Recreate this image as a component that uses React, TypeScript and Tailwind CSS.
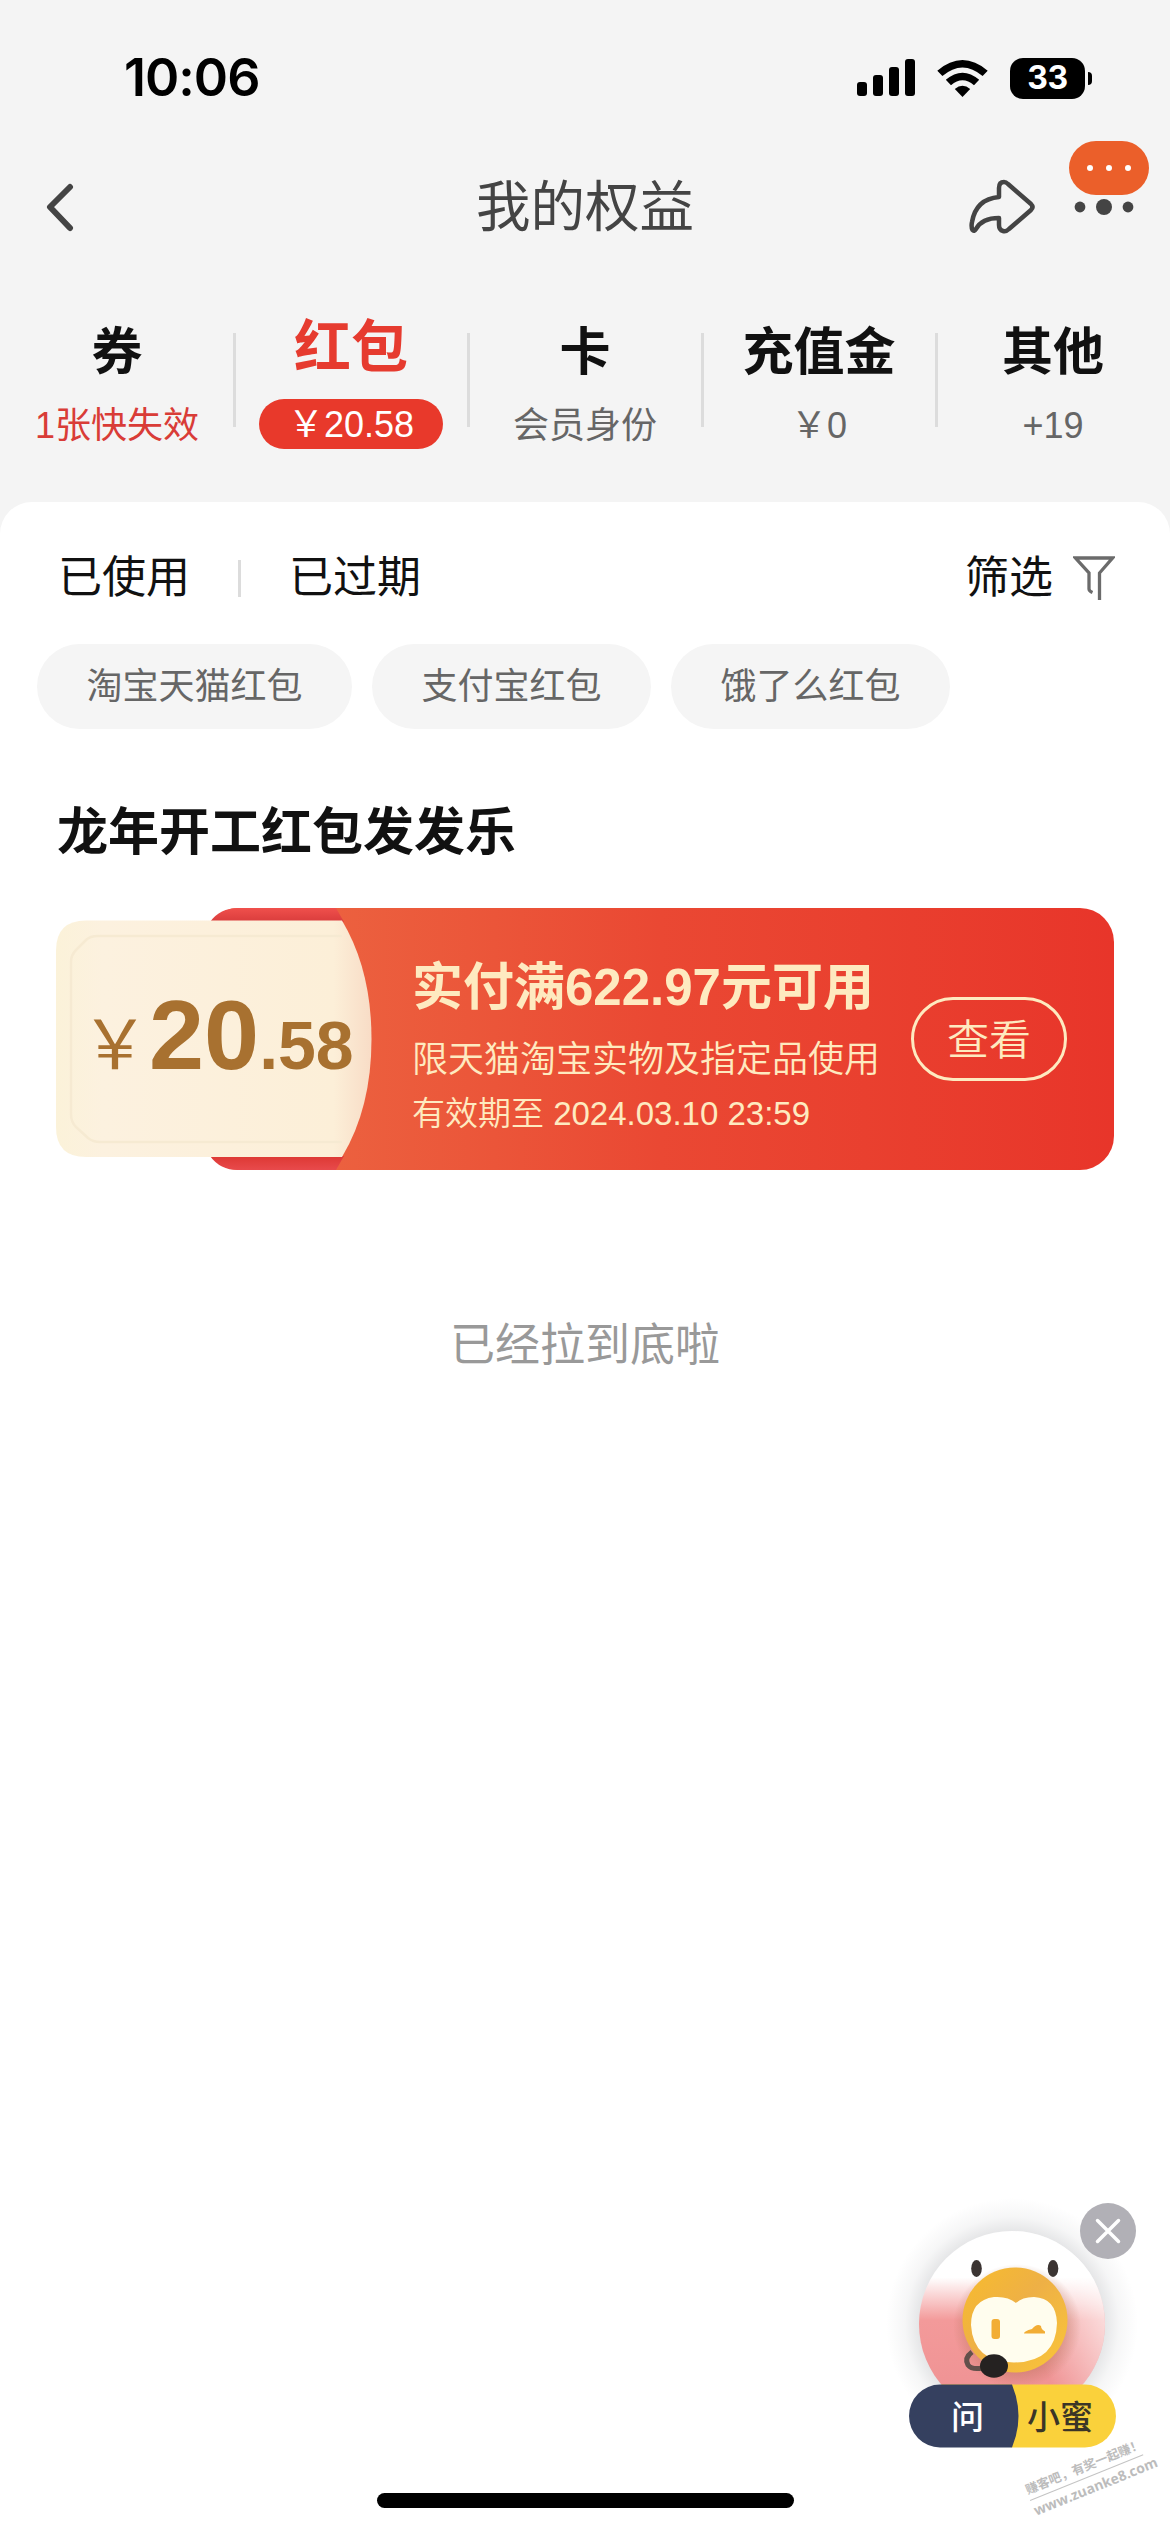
import { ReactNode } from 'react';
import clsx from 'clsx';

interface Benefit {
  name: string;
  detail: string;
  active?: boolean;
  urgent?: boolean;
}

const benefits: Benefit[] = [
  { name: '券', detail: '1张快失效', urgent: true },
  { name: '红包', detail: '￥20.58', active: true },
  { name: '卡', detail: '会员身份' },
  { name: '充值金', detail: '￥0' },
  { name: '其他', detail: '+19' },
];

const filters = ['淘宝天猫红包', '支付宝红包', '饿了么红包'];

const StatusBar = () => (
  <div className="flex h-[156px] items-center pl-[124px] pr-[78px]">
    <span className="font-['Inter'] text-[52px] font-semibold leading-none tracking-[-1px] text-black">10:06</span>
    <div className="ml-auto flex items-center">
      <svg width="58" height="38" viewBox="0 0 58 38">
        <rect x="0" y="23" width="10" height="14" rx="3" />
        <rect x="16" y="16" width="10" height="21" rx="3" />
        <rect x="32" y="8" width="10" height="29" rx="3" />
        <rect x="48" y="0" width="10" height="37" rx="3" />
      </svg>
      <svg className="ml-[22px]" width="51" height="37" viewBox="0 0 51 37">
        <path d="M25.500 37 L17.800 29 Q25.500 22.500 33.200 29 Z" />
        <path d="M8.800 19.800 Q25.500 5.500 42.200 19.800 L37 25.200 Q25.500 15.500 14 25.200 Z" />
        <path d="M0.300 10.700 Q25.500 -10.600 50.700 10.700 L45.600 16 Q25.500 -1.200 5.400 16 Z" />
      </svg>
      <div className="ml-[22px] flex h-[41px] w-[75px] items-center justify-center rounded-[13px] bg-black font-['Inter'] text-[32px] font-bold leading-none tracking-[-0.5px] text-white">
        33
      </div>
      <div className="ml-[3px] h-[13px] w-1 rounded-r-full bg-black" />
    </div>
  </div>
);

const NavBar = () => (
  <div className="relative flex h-[102px] items-center justify-center">
    <svg className="absolute left-[44px] top-[26px]" width="32" height="50" viewBox="0 0 32 50" fill="none" stroke="#444" strokeWidth="6" strokeLinecap="round" strokeLinejoin="round">
      <path d="M26 5 L6 25 L26 46" />
    </svg>
    <h1 className="pt-[3px] text-[54.500px] leading-none text-[#444]">我的权益</h1>
    <svg className="absolute left-[966px] top-[21px]" width="72" height="60" viewBox="0 0 72 60" fill="none" stroke="#444" strokeWidth="4.500" strokeLinejoin="round">
      <path d="M33 20 V11 Q33 5 38 5 Q40 5 42 7 L65 27 Q68 30 65 33 L43 52 Q40 55 37 54 Q33 53 33 48 V41 Q16 41 10 52 Q8 55 6.500 53 Q5 50 6 45 Q10 22 33 20 Z" />
    </svg>
    <svg className="absolute left-[1074px] top-[42px]" width="60" height="18" viewBox="0 0 60 18" fill="#444">
      <circle cx="6" cy="9" r="5.400" />
      <circle cx="30" cy="9" r="8" />
      <circle cx="54" cy="9" r="5.400" />
    </svg>
    <div className="absolute -top-[15px] left-[1069px] flex h-[54px] w-[80px] items-center justify-center gap-[13px] rounded-full bg-[#eb5f2a]">
      <i className="size-1.5 rounded-full bg-white" />
      <i className="size-1.5 rounded-full bg-white" />
      <i className="size-1.5 rounded-full bg-white" />
    </div>
  </div>
);

const BenefitTab = ({ name, detail, active, urgent }: Benefit) => (
  <div className="flex w-[234px] flex-col items-center pt-[64px]">
    <span
      className={clsx(
        'flex h-[60px] items-center whitespace-nowrap font-bold leading-none',
        active ? '-mt-[5px] mb-[5px] text-[57px] text-[#e63b2f]' : 'text-[51px] text-[#111]',
      )}
    >
      {name}
    </span>
    <span
      className={clsx(
        'mt-[17px] flex h-[50px] items-center whitespace-nowrap rounded-full text-[36px] leading-none',
        active && 'bg-[#e8392b] px-[29px] pt-0.5 text-white',
        urgent && 'pt-1 text-[#d93c37]',
        !active && !urgent && 'pt-1 text-[#666]',
      )}
    >
      {detail}
    </span>
  </div>
);

const FilterIcon = () => (
  <svg width="42" height="44" viewBox="0 0 42 44" fill="none" stroke="#6b6b6b" strokeWidth="3.300">
    <path d="M26.500 44 V17 L39.500 2 H2.500 L16 17 V33 Q16 35 19.500 36.500" />
  </svg>
);

const Coupon = () => (
  <div className="relative ml-[56px] mt-[45px] h-[262px] w-[1058px]">
    <div className="absolute inset-y-0 left-[150px] right-0 rounded-l-[32px] rounded-r-[34px] bg-linear-to-r from-[#ec6340] from-10% via-[#ea4833] via-50% to-[#e8352a]" />
    <svg className="absolute left-0 top-0" width="330" height="262" viewBox="0 0 330 262">
      <defs>
        <linearGradient id="cream" x1="0" x2="1">
          <stop offset="0" stopColor="#fbf2d9" />
          <stop offset="0.150" stopColor="#fcf1df" />
          <stop offset="0.880" stopColor="#fcefd8" />
          <stop offset="1" stopColor="#f8dcc6" />
        </linearGradient>
        <linearGradient id="slotTop" x1="0" y1="0" x2="0" y2="1">
          <stop offset="0" stopColor="#f0504c" />
          <stop offset="1" stopColor="#d93c3c" />
        </linearGradient>
        <linearGradient id="slotBottom" x1="0" y1="0" x2="0" y2="1">
          <stop offset="0" stopColor="#dd3833" />
          <stop offset="1" stopColor="#e84a4c" />
        </linearGradient>
      </defs>
      <path d="M154 14 Q164 0 182 0 H280 L288 14 Z" fill="url(#slotTop)" />
      <path d="M154 248 Q164 262 182 262 H280 L288 248 Z" fill="url(#slotBottom)" />
      <path d="M30 12.500 H286 Q315.500 62 315.500 131 Q315.500 200 286 249 H30 Q0 249 0 219 V42.500 Q0 12.500 30 12.500 Z" fill="url(#cream)" />
      <path d="M286 28 H42 Q34 28 30 32 L20 42 Q15 47 15 54 V206 Q15 214 20 219 L32 230 Q37 234 44 234 H286" fill="none" stroke="#f6ead2" strokeWidth="2.500" />
    </svg>
    <div className="relative flex h-full">
      <div className="-mt-1 flex w-[330px] items-baseline whitespace-nowrap pl-[25px] leading-[262px] text-[#a87130]">
        <span className="text-[68px]">￥</span>
        <span className="text-[99px] font-bold">20</span>
        <span className="text-[68px] font-bold">.58</span>
      </div>
      <div className="flex w-[525px] flex-col whitespace-nowrap pl-[26px] pt-[49px] text-[#feeac0]">
        <p className="h-[62px] text-[51px] font-bold leading-[62px]">实付满622.97元可用</p>
        <p className="mt-[18px] h-[46px] text-[36px] font-[350] leading-[46px]">限天猫淘宝实物及指定品使用</p>
        <p className="mt-[9px] h-[44px] text-[33px] font-[350] leading-[44px]">有效期至 2024.03.10 23:59</p>
      </div>
      <button className="mt-[89px] h-[84px] w-[156px] rounded-full border-3 border-[#feeac0] pt-[3px] text-[42px] font-[350] leading-none text-[#feeac0]">
        查看
      </button>
    </div>
  </div>
);

const Assistant = () => (
  <div className="absolute left-[870px] top-[2180px] h-[352px] w-[300px]">
    <svg width="300" height="352" viewBox="0 0 300 352">
      <defs>
        <radialGradient id="halo">
          <stop offset="0.740" stopColor="#8d9096" stopOpacity="0.220" />
          <stop offset="0.850" stopColor="#8d9096" stopOpacity="0.080" />
          <stop offset="1" stopColor="#8d9096" stopOpacity="0" />
        </radialGradient>
        <linearGradient id="sky" x1="0" y1="0" x2="0" y2="1">
          <stop offset="0.250" stopColor="#fff" />
          <stop offset="0.480" stopColor="#f39a9a" />
          <stop offset="1" stopColor="#ee9092" />
        </linearGradient>
        <linearGradient id="shine" x1="0.600" y1="0.600" x2="1" y2="0.400">
          <stop offset="0" stopColor="#fff" stopOpacity="0" />
          <stop offset="1" stopColor="#fff" stopOpacity="0.700" />
        </linearGradient>
        <linearGradient id="head" x1="0" y1="0" x2="1" y2="1">
          <stop offset="0" stopColor="#f8bc2c" />
          <stop offset="0.450" stopColor="#eeb046" />
          <stop offset="1" stopColor="#fac637" />
        </linearGradient>
        <radialGradient id="headShadow">
          <stop offset="0.750" stopColor="#b06a50" stopOpacity="0.350" />
          <stop offset="1" stopColor="#b06a50" stopOpacity="0" />
        </radialGradient>
      </defs>
      <circle cx="142" cy="144" r="126" fill="url(#halo)" />
      <circle cx="142" cy="144" r="93" fill="url(#sky)" />
      <circle cx="142" cy="144" r="93" fill="url(#shine)" />
      <ellipse cx="147" cy="146" rx="64" ry="62" fill="url(#headShadow)" />
      <ellipse cx="106.500" cy="88.500" rx="5.300" ry="8.500" fill="#3b3432" />
      <ellipse cx="183" cy="88.500" rx="5.300" ry="8.500" fill="#3b3432" />
      <circle cx="145" cy="140" r="52.500" fill="url(#head)" />
      <path d="M146 123 Q138 116 124 117 Q101 120 101 145 Q103 182 144 182.500 Q186 182 187 143 Q186 118 164 117 Q152 117 146 123 Z" fill="#fffdee" />
      <rect x="121.500" y="139" width="8.500" height="20" rx="3" fill="#f2ad35" />
      <path d="M154 153.500 Q154 151 162 149 Q167 143 171 146 Q171 149 175 151.500 L175 153.500 Z" fill="#f2ad35" />
      <path d="M102 172 Q94 178 98 185 Q102 190 112 188" fill="none" stroke="#62504b" strokeWidth="5" />
      <ellipse cx="124" cy="186" rx="14" ry="11.800" fill="#252221" />
      <path d="M71 204.500 H215 A31 31.500 0 0 1 215 267.500 H142 Z" fill="#fad13b" />
      <path d="M70 204.500 H142 Q155 236 142 267.500 H70 A31 31.500 0 0 1 70 204.500 Z" fill="#35405f" />
      <circle cx="238" cy="51" r="28" fill="#b1b0b6" />
      <path d="M227.500 40.500 L248.500 61.500 M248.500 40.500 L227.500 61.500" stroke="#fff" strokeWidth="3.500" strokeLinecap="round" />
    </svg>
    <div className="absolute left-[39px] top-[206px] flex h-[62px] w-[207px] items-center text-[33px] font-medium leading-none">
      <span className="ml-[42px] text-white">问</span>
      <span className="ml-[43px] whitespace-nowrap text-[#3b3527]">小蜜</span>
    </div>
    <div className="absolute left-[156px] top-[279px] w-[122px] -rotate-[22deg] whitespace-nowrap text-[#bcbcbc]">
      <div className="border-b border-[#c4c4c4] pb-0.5 text-[12.500px] font-bold leading-[16px]">赚客吧，有奖一起赚！</div>
      <div className="pt-0.5 font-['Open_Sans'] text-[14px] font-bold leading-[18px]">www.zuanke8.com</div>
    </div>
  </div>
);

const Sheet = ({ children }: { children: ReactNode }) => (
  <main className="flex h-[2030px] flex-col rounded-t-[32px] bg-white">{children}</main>
);

export default function App() {
  return (
    <div className="relative h-[2532px] w-[1170px] overflow-hidden bg-[#f4f4f4] font-['Liberation_Sans','Noto_Sans_CJK_SC',sans-serif]">
      <StatusBar />
      <NavBar />

      {/* Benefit categories */}
      <nav className="flex h-[244px]">
        {benefits.map((benefit, i) => (
          <div key={benefit.name} className="relative flex">
            {i > 0 && <i className="absolute -left-[1px] top-[75px] h-[94px] w-[3px] bg-[#dcdcdc]" />}
            <BenefitTab {...benefit} />
          </div>
        ))}
      </nav>

      <Sheet>
        <div className="mt-[46px] flex h-[60px] items-center pl-[58px] pr-[55px] text-[44px] leading-none text-[#111]">
          <span>已使用</span>
          <i className="mx-[48px] h-[37px] w-[3px] bg-[#dcdcdc]" />
          <span>已过期</span>
          <span className="ml-auto mr-[20px]">筛选</span>
          <FilterIcon />
        </div>

        <div className="ml-[37px] mt-[36px] flex gap-[20px]">
          {filters.map((label) => (
            <span key={label} className="flex h-[85px] items-center rounded-full bg-[#f5f5f5] px-[49.500px] text-[36px] leading-none text-[#666]">
              {label}
            </span>
          ))}
        </div>

        <h2 className="ml-[57px] mt-[74px] h-[60px] text-[51px] font-bold leading-[60px] text-[#111]">龙年开工红包发发乐</h2>
        <Coupon />
        <p className="mt-[146px] h-[60px] text-center text-[45px] leading-[60px] text-[#999]">已经拉到底啦</p>

        {/* Home indicator */}
        <div className="mx-auto mb-[24px] mt-auto h-[15px] w-[417px] rounded-full bg-black" />
      </Sheet>

      <Assistant />
    </div>
  );
}
